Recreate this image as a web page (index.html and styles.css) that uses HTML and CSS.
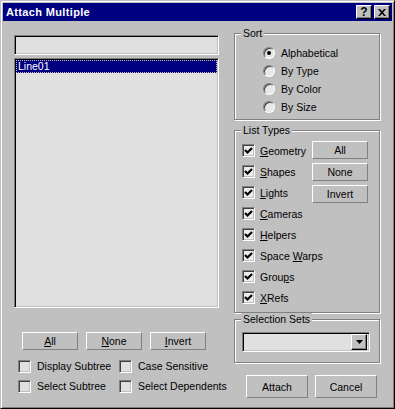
FILE: index.html
```html
<!DOCTYPE html>
<html lang="en">
<head>
  <meta charset="UTF-8">
  <title>Attach Multiple</title>
  <link rel="stylesheet" href="styles.css">
</head>
<body>

<div class="window">
  <div class="titlebar">
    <span class="title">Attach Multiple</span>
    <div class="title-buttons">
      <span class="tbtn">?</span>
      <span class="tbtn">
        <svg width="8" height="7" viewBox="0 0 8 7"><path d="M0 0h2l2 2.2L6 0h2L5 3.5 8 7H6L4 4.8 2 7H0l3-3.5z" fill="#000"/></svg>
      </span>
    </div>
  </div>

  <div class="main">
    <div class="left">
      <div class="field search"></div>
      <div class="field listbox">
        <div class="list-item selected">Line01</div>
      </div>

      <div class="btn-row">
        <button class="btn"><u>A</u>ll</button>
        <button class="btn"><u>N</u>one</button>
        <button class="btn"><u>I</u>nvert</button>
      </div>

      <div class="opt-grid">
        <div class="check"><span class="box"></span>Display Subtree</div>
        <div class="check"><span class="box"></span>Case Sensitive</div>
        <div class="check"><span class="box"></span>Select Subtree</div>
        <div class="check"><span class="box"></span>Select Dependents</div>
      </div>
    </div>

    <div class="right">
      <div class="group sort">
        <span class="group-label">Sort</span>
        <div class="radio"><span class="circle on"></span>Alphabetical</div>
        <div class="radio"><span class="circle"></span>By Type</div>
        <div class="radio"><span class="circle"></span>By Color</div>
        <div class="radio"><span class="circle"></span>By Size</div>
      </div>

      <div class="group types">
        <span class="group-label">List Types</span>
        <div class="check-list">
          <div class="check"><span class="box checked"><svg width="9" height="9" viewBox="0 0 9 9"><path d="M1 4l2.5 2.5L8 2" stroke="#000" stroke-width="2.2" fill="none"/></svg></span><span><u>G</u>eometry</span></div>
          <div class="check"><span class="box checked"><svg width="9" height="9" viewBox="0 0 9 9"><path d="M1 4l2.5 2.5L8 2" stroke="#000" stroke-width="2.2" fill="none"/></svg></span><span><u>S</u>hapes</span></div>
          <div class="check"><span class="box checked"><svg width="9" height="9" viewBox="0 0 9 9"><path d="M1 4l2.5 2.5L8 2" stroke="#000" stroke-width="2.2" fill="none"/></svg></span><span><u>L</u>ights</span></div>
          <div class="check"><span class="box checked"><svg width="9" height="9" viewBox="0 0 9 9"><path d="M1 4l2.5 2.5L8 2" stroke="#000" stroke-width="2.2" fill="none"/></svg></span><span><u>C</u>ameras</span></div>
          <div class="check"><span class="box checked"><svg width="9" height="9" viewBox="0 0 9 9"><path d="M1 4l2.5 2.5L8 2" stroke="#000" stroke-width="2.2" fill="none"/></svg></span><span><u>H</u>elpers</span></div>
          <div class="check"><span class="box checked"><svg width="9" height="9" viewBox="0 0 9 9"><path d="M1 4l2.5 2.5L8 2" stroke="#000" stroke-width="2.2" fill="none"/></svg></span><span>Space <u>W</u>arps</span></div>
          <div class="check"><span class="box checked"><svg width="9" height="9" viewBox="0 0 9 9"><path d="M1 4l2.5 2.5L8 2" stroke="#000" stroke-width="2.2" fill="none"/></svg></span><span>Grou<u>p</u>s</span></div>
          <div class="check"><span class="box checked"><svg width="9" height="9" viewBox="0 0 9 9"><path d="M1 4l2.5 2.5L8 2" stroke="#000" stroke-width="2.2" fill="none"/></svg></span><span><u>X</u>Refs</span></div>
        </div>
        <div class="type-buttons">
          <button class="btn">All</button>
          <button class="btn">None</button>
          <button class="btn">Invert</button>
        </div>
      </div>

      <div class="group sets">
        <span class="group-label">Selection Sets</span>
        <div class="field select">
          <span class="drop-btn">
            <svg width="7" height="4" viewBox="0 0 7 4"><path d="M0 0h7L3.5 4z" fill="#000"/></svg>
          </span>
        </div>
      </div>

      <div class="action-row">
        <button class="btn big">Attach</button>
        <button class="btn big">Cancel</button>
      </div>
    </div>
  </div>
</div>

</body>
</html>
```

FILE: styles.css
```css
body {
  margin: 0;
  font-family: "Liberation Sans", Arial, sans-serif;
  font-size: 10.5px;
  color: #000;
}

.window {
  width: 395px;
  height: 409px;
  box-sizing: border-box;
  background: #c0c0c0;
  border: 1px solid;
  border-color: #c0c0c0 #000 #000 #c0c0c0;
  box-shadow: inset 1px 1px #fff, inset -1px -1px #808080;
  padding: 2px;
  display: flex;
  flex-direction: column;
}

.titlebar {
  height: 18px;
  flex: none;
  background: #000080;
  color: #fff;
  display: flex;
  align-items: center;
  justify-content: space-between;
  padding: 0 2px 0 3px;
}

.title {
  font-size: 11px;
  font-weight: bold;
  letter-spacing: 0.35px;
}

.title-buttons {
  display: flex;
  gap: 2px;
}

.tbtn {
  width: 16px;
  height: 14px;
  box-sizing: border-box;
  background: #c0c0c0;
  border: 1px solid;
  border-color: #fff #000 #000 #fff;
  box-shadow: inset -1px -1px #808080;
  color: #000;
  display: flex;
  align-items: center;
  justify-content: center;
  font-size: 12px;
  font-weight: bold;
}

.main {
  display: flex;
  flex: 1;
}

/* left column */
.left {
  width: 205px;
  margin: 14px 0 0 11px;
  display: flex;
  flex-direction: column;
}

.field {
  box-sizing: border-box;
  background: #e0e0e0;
  border: 1px solid;
  border-color: #808080 #fff #fff #808080;
  box-shadow: inset 1px 1px #000, inset -1px -1px #c0c0c0;
}

.search {
  height: 20px;
}

.listbox {
  height: 250px;
  margin-top: 3px;
  padding: 1px;
}

.list-item {
  height: 13px;
  line-height: 13px;
  padding-left: 2px;
}

.list-item.selected {
  background: #000080;
  color: #fff;
  outline: 1px dotted #c0c0c0;
  outline-offset: -1px;
}

.btn {
  box-sizing: border-box;
  width: 56px;
  height: 18px;
  padding: 0;
  background: #c0c0c0;
  border: 1px solid;
  border-color: #fff #808080 #808080 #fff;
  font: inherit;
  color: #000;
}

.btn-row {
  display: flex;
  gap: 8px;
  margin: 24px 0 0 8px;
}

.opt-grid {
  display: grid;
  grid-template-columns: 101px auto;
  margin: 6px 0 0 4px;
}

.check {
  display: flex;
  align-items: center;
  gap: 6px;
  height: 20px;
  white-space: nowrap;
}

.box {
  width: 13px;
  height: 13px;
  flex: none;
  box-sizing: border-box;
  background: #e0e0e0;
  border: 1px solid;
  border-color: #808080 #fff #fff #808080;
  box-shadow: inset 1px 1px #404040, inset -1px -1px #c0c0c0;
  display: flex;
  align-items: center;
  justify-content: center;
}

.box.checked {
  background: #ececec;
}

/* right column */
.right {
  width: 146px;
  margin: 12px 0 0 15px;
  display: flex;
  flex-direction: column;
}

.group {
  position: relative;
  box-sizing: border-box;
  border: 1px solid #808080;
  box-shadow: inset 1px 1px #fff, 1px 1px #fff;
}

.group-label {
  position: absolute;
  top: -7px;
  left: 6px;
  padding: 0 2px;
  background: #c0c0c0;
  line-height: 12px;
}

.sort {
  height: 87px;
  padding: 10px 0 0 28px;
}

.radio {
  display: flex;
  align-items: center;
  gap: 6px;
  height: 18px;
}

.circle {
  width: 12px;
  height: 12px;
  box-sizing: border-box;
  border-radius: 50%;
  background: #e8e8e8;
  border: 1px solid;
  border-color: #808080 #fff #fff #808080;
  box-shadow: inset 1px 1px #404040;
  display: flex;
  align-items: center;
  justify-content: center;
}

.circle.on::after {
  content: "";
  width: 4px;
  height: 4px;
  border-radius: 50%;
  background: #000;
}

.types {
  height: 183px;
  margin-top: 10px;
  padding: 9px 0 0 7px;
  display: flex;
}

.check-list {
  width: 70px;
}

.check-list .check {
  height: 21px;
  gap: 5px;
}

.type-buttons {
  display: flex;
  flex-direction: column;
  gap: 4px;
  margin-top: 1px;
}

.sets {
  height: 44px;
  margin-top: 6px;
  padding: 12px 0 0 7px;
}

.select {
  width: 128px;
  height: 20px;
  display: flex;
  align-items: center;
  justify-content: flex-end;
  padding-right: 2px;
}

.drop-btn {
  width: 16px;
  height: 16px;
  box-sizing: border-box;
  background: #c0c0c0;
  border: 1px solid;
  border-color: #fff #000 #000 #fff;
  box-shadow: inset -1px -1px #808080;
  display: flex;
  align-items: center;
  justify-content: center;
}

.action-row {
  display: flex;
  gap: 7px;
  margin: 12px 0 0 12px;
}

.btn.big {
  width: 62px;
  height: 23px;
}
```
